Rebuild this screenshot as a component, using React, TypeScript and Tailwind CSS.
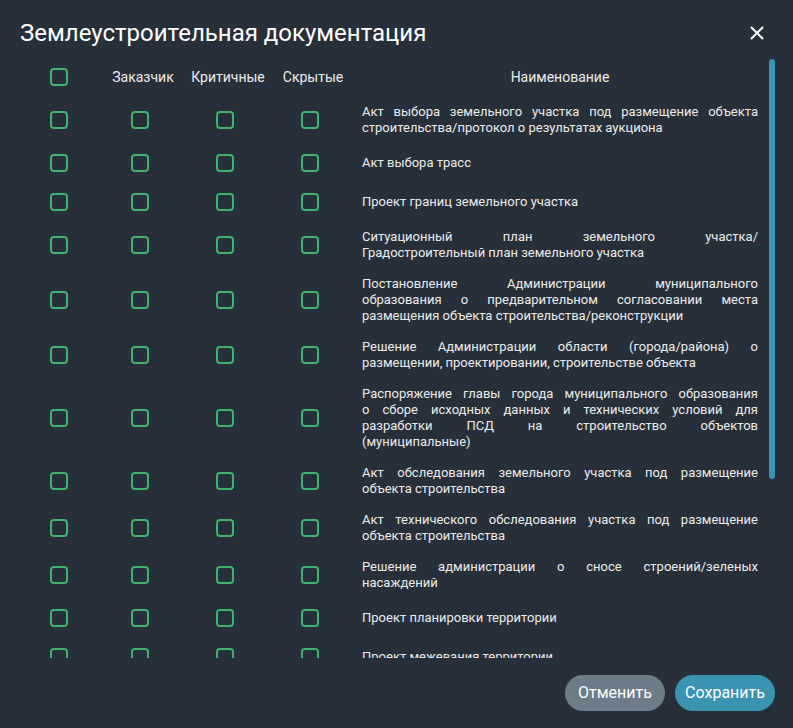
import React from 'react';

// each entry is split into the lines shown in the list
const docs: string[][] = [
  ['Акт выбора земельного участка под размещение объекта', 'строительства/протокол о результатах аукциона'],
  ['Акт выбора трасс'],
  ['Проект границ земельного участка'],
  ['Ситуационный план земельного участка/', 'Градостроительный план земельного участка'],
  [
    'Постановление Администрации муниципального',
    'образования о предварительном согласовании места',
    'размещения объекта строительства/реконструкции',
  ],
  ['Решение Администрации области (города/района) о', 'размещении, проектировании, строительстве объекта'],
  [
    'Распоряжение главы города муниципального образования',
    'о сборе исходных данных и технических условий для',
    'разработки ПСД на строительство объектов',
    '(муниципальные)',
  ],
  ['Акт обследования земельного участка под размещение', 'объекта строительства'],
  ['Акт технического обследования участка под размещение', 'объекта строительства'],
  ['Решение администрации о сносе строений/зеленых', 'насаждений'],
  ['Проект планировки территории'],
  ['Проект межевания территории'],
  ['Кадастровый паспорт земельного участка'],
  ['Договор аренды земельного участка'],
  ['Свидетельство о регистрации права'],
  ['Разрешение на строительство'],
  ['Акт о выносе границ в натуру'],
  ['Топографическая съемка участка'],
];

function Box({ shift }: { shift?: boolean }) {
  return (
    <span
      className={`block h-[18px] w-[18px] rounded-[4px] border-2 border-[#3fb26f] ${shift ? 'mr-1.5' : ''}`}
    />
  );
}

const grid = 'grid grid-cols-[86px_82px_88px_82px_1fr]';

export default function App() {
  return (
    <div
      className="flex h-[728px] w-[793px] flex-col bg-[#27303a] text-[#ebebeb]"
      style={{ fontFamily: 'Roboto, "Liberation Sans", sans-serif' }}
    >
      {/* title */}
      <div className="flex h-8 items-center justify-between pl-5 pr-6 mt-[17px]">
        <h1 className="text-[24px] leading-8 font-normal text-white">Землеустроительная документация</h1>
        <button className="flex h-6 w-6 items-center justify-center text-white">
          <svg width="14" height="14" viewBox="0 0 14 14" fill="none" stroke="currentColor" strokeWidth="2">
            <path d="M1 1L13 13M13 1L1 13" />
          </svg>
        </button>
      </div>

      {/* list */}
      <div className="relative ml-4 mr-[18px] mt-2 h-[601px]">
        <div className="h-full overflow-y-auto [scrollbar-width:none]">
          <div className={`${grid} items-center text-[14px] leading-4`}>
            <div className="flex h-6 items-center justify-center my-[7.5px]">
              <Box />
            </div>
            <div className="text-center">Заказчик</div>
            <div className="text-center">Критичные</div>
            <div className="text-center">Скрытые</div>
            <div className="pl-2 pr-[17px] text-center">Наименование</div>
          </div>
          {docs.map((lines) => (
            <div key={lines.join(' ')} className={`${grid} items-center`}>
              <div className="flex h-6 items-center justify-center">
                <Box />
              </div>
              <div className="flex items-center justify-center">
                <Box shift />
              </div>
              <div className="flex items-center justify-center">
                <Box shift />
              </div>
              <div className="flex items-center justify-center">
                <Box shift />
              </div>
              <div className="flex min-h-[39px] items-center py-[7.5px] pl-2 pr-[17px]">
                <p className="w-full text-[13px] leading-4">
                  {lines.map((line, i) => (
                    <span
                      key={i}
                      className={
                        i < lines.length - 1
                          ? 'block whitespace-nowrap text-justify [text-align-last:justify]'
                          : 'block'
                      }
                    >
                      {line}
                    </span>
                  ))}
                </p>
              </div>
            </div>
          ))}
        </div>
        {/* scroll thumb */}
        <div className="absolute right-0 top-[2px] h-[420px] w-[6px] rounded-full bg-[#3a93b0]" />
      </div>

      {/* footer */}
      <div className="mt-[17px] flex justify-end gap-2.5 pr-[18px]">
        <button className="h-9 w-[100px] rounded-full bg-[#6c7c88] text-[16px] text-white">Отменить</button>
        <button className="h-9 w-[100px] rounded-full bg-[#3a93b0] text-[16px] text-white">Сохранить</button>
      </div>
    </div>
  );
}
